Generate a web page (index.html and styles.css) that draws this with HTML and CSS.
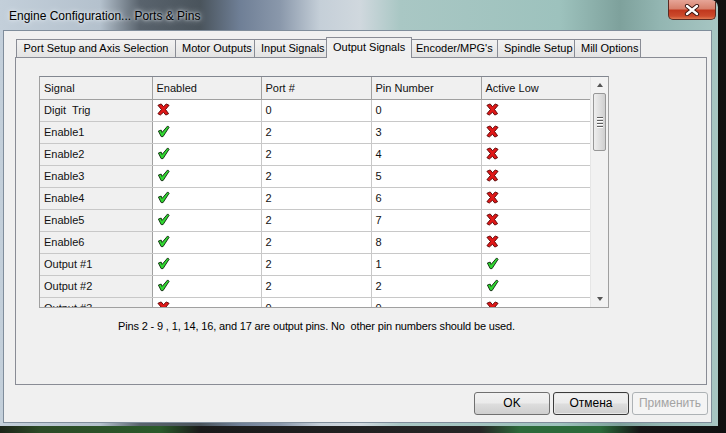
FILE: index.html
```html
<!DOCTYPE html>
<html>
<head>
<meta charset="utf-8">
<title>Engine Configuration... Ports &amp; Pins</title>
<link rel="stylesheet" href="styles.css">
</head>
<body>
<svg width="0" height="0" style="position:absolute">
	<defs>
		<symbol id="no" viewBox="0 0 14 14">
			<path d="M1,2.5 L4.5,1 L7,4 L10,1 L13,2.5 L9.2,7 L12.5,11.5 L9.5,13 L7,10 L3.5,13 L1,11.5 L4.8,7 Z" fill="#e01818" stroke="#5a0000" stroke-width="1" stroke-linejoin="round"/>
		</symbol>
		<symbol id="yes" viewBox="0 0 14 14">
			<path d="M1.5,6.5 L4.5,5.5 L5.5,8 L11.5,1 L13,2.5 L6.5,12.5 L4.5,12.5 Z" fill="#30d830" stroke="#0c2a0c" stroke-width="1" stroke-linejoin="round"/>
		</symbol>
	</defs>
</svg>

<div class="window">
	<div class="titlebar">
		<span class="title">Engine Configuration... Ports &amp; Pins</span>
		<div class="close">
			<svg width="16" height="12" viewBox="0 0 16 12">
				<path d="M3,2 L13,10 M13,2 L3,10" stroke="#3a1410" stroke-width="4.2" stroke-linecap="round"/>
				<path d="M3,2 L13,10 M13,2 L3,10" stroke="#ffffff" stroke-width="2.4" stroke-linecap="round"/>
			</svg>
		</div>
	</div>

	<div class="client">
		<div class="tabs">
			<div class="tab">Port Setup and Axis Selection</div>
			<div class="tab">Motor Outputs</div>
			<div class="tab">Input Signals</div>
			<div class="tab selected">Output Signals</div>
			<div class="tab">Encoder/MPG's</div>
			<div class="tab">Spindle Setup</div>
			<div class="tab">Mill Options</div>
		</div>

		<div class="panel">
			<div class="grid">
				<div class="grid_body">
					<table>
						<tr class="head">
							<td class="c1">Signal</td>
							<td class="c2">Enabled</td>
							<td class="c3">Port #</td>
							<td class="c4">Pin Number</td>
							<td class="c5">Active Low</td>
						</tr>
						<tr>
							<td class="name">Digit&nbsp; Trig</td>
							<td><svg class="ico"><use href="#no"/></svg></td>
							<td>0</td>
							<td>0</td>
							<td><svg class="ico"><use href="#no"/></svg></td>
						</tr>
						<tr>
							<td class="name">Enable1</td>
							<td><svg class="ico"><use href="#yes"/></svg></td>
							<td>2</td>
							<td>3</td>
							<td><svg class="ico"><use href="#no"/></svg></td>
						</tr>
						<tr>
							<td class="name">Enable2</td>
							<td><svg class="ico"><use href="#yes"/></svg></td>
							<td>2</td>
							<td>4</td>
							<td><svg class="ico"><use href="#no"/></svg></td>
						</tr>
						<tr>
							<td class="name">Enable3</td>
							<td><svg class="ico"><use href="#yes"/></svg></td>
							<td>2</td>
							<td>5</td>
							<td><svg class="ico"><use href="#no"/></svg></td>
						</tr>
						<tr>
							<td class="name">Enable4</td>
							<td><svg class="ico"><use href="#yes"/></svg></td>
							<td>2</td>
							<td>6</td>
							<td><svg class="ico"><use href="#no"/></svg></td>
						</tr>
						<tr>
							<td class="name">Enable5</td>
							<td><svg class="ico"><use href="#yes"/></svg></td>
							<td>2</td>
							<td>7</td>
							<td><svg class="ico"><use href="#no"/></svg></td>
						</tr>
						<tr>
							<td class="name">Enable6</td>
							<td><svg class="ico"><use href="#yes"/></svg></td>
							<td>2</td>
							<td>8</td>
							<td><svg class="ico"><use href="#no"/></svg></td>
						</tr>
						<tr>
							<td class="name">Output #1</td>
							<td><svg class="ico"><use href="#yes"/></svg></td>
							<td>2</td>
							<td>1</td>
							<td><svg class="ico"><use href="#yes"/></svg></td>
						</tr>
						<tr>
							<td class="name">Output #2</td>
							<td><svg class="ico"><use href="#yes"/></svg></td>
							<td>2</td>
							<td>2</td>
							<td><svg class="ico"><use href="#yes"/></svg></td>
						</tr>
						<tr>
							<td class="name">Output #3</td>
							<td><svg class="ico"><use href="#no"/></svg></td>
							<td>0</td>
							<td>0</td>
							<td><svg class="ico"><use href="#no"/></svg></td>
						</tr>
					</table>
				</div>
				<div class="vscroll">
					<div class="arrow up"></div>
					<div class="thumb"><span></span><span></span><span></span><span></span></div>
					<div class="track"></div>
					<div class="arrow down"></div>
				</div>
			</div>
			<div class="note">Pins 2 - 9 , 1, 14, 16, and 17 are output pins. No&nbsp; other pin numbers should be used.</div>
		</div>

		<div class="buttons">
			<div class="btn">OK</div>
			<div class="btn focus">Отмена</div>
			<div class="btn off">Применить</div>
		</div>
	</div>
</div>
</body>
</html>
```

FILE: styles.css
```css
html, body {margin:0;padding:0}
body {width:726px;height:433px;overflow:hidden;font-family:"Liberation Sans",Arial,sans-serif;font-size:11px;color:#000;
	background:linear-gradient(90deg,#1c2418 0px,#2c4a26 40px,#2a5a2a 160px,#1a1a1a 200px,#262626 480px,#2c6a3a 520px,#2a6a3a 600px,#151515 640px,#101010 100%)}

.window {width:718px;height:426px;border-radius:0 7px 0 0;
	background:linear-gradient(90deg,#c3cfda 0px,#b4c1cd 100px,#59636d 140px,#4a545c 200px,#6f7f96 240px,#8a98ab 280px,#c5cfd8 320px,#d0d8de 360px,#a9c7c4 400px,#9dc2bd 560px,#7ea19c 620px,#93b6b2 660px,#a7c6c3 718px);
	display:flex;flex-direction:column;overflow:hidden}

.titlebar {height:30px;display:flex;align-items:flex-start;justify-content:space-between}
.title {font-family:"Liberation Sans",Arial,sans-serif;font-size:12px;color:#000;margin:9px 0 0 9px;text-shadow:0 0 6px #e8eef4,0 0 3px #e8eef4}
.close {width:46px;height:19px;margin-right:2px;border:1px solid #5a2a22;border-top:none;border-radius:0 0 5px 5px;
	background:linear-gradient(180deg,#e6a597 0%,#d7816d 45%,#c1381e 55%,#cc4a2c 85%,#e07a52 100%);
	display:flex;align-items:center;justify-content:center}

.client {margin-left:3px;width:707px;height:391px;border:1px solid #7f8d9b;background:#f0f0f0;display:flex;flex-direction:column}

.tabs {display:flex;align-items:flex-end;height:19px;margin-top:7px;padding-left:12px}
.tab {height:18px;line-height:17px;padding:0 6px;border:1px solid #898c95;border-bottom:none;margin-right:-1px;
	background:linear-gradient(180deg,#f2f2f2,#e3e3e3);white-space:nowrap;text-align:center;box-sizing:border-box}
.tab:nth-child(1) {width:160px}
.tab:nth-child(2) {width:80px}
.tab:nth-child(3) {width:75px}
.tab:nth-child(4) {width:83px}
.tab:nth-child(5) {width:89px}
.tab:nth-child(6) {width:78px}
.tab:nth-child(7) {width:67px}
.tab.selected {height:21px;line-height:19px;background:#f0f0f0;position:relative;z-index:1;margin-bottom:-1px;margin-left:-2px;margin-right:-3px;width:86px}

.panel {margin-left:11px;width:692px;height:328px;box-sizing:border-box;border:1px solid #898c95;background:#f0f0f0}

.grid {display:flex;margin:18px 0 0 23px;width:570px;height:232px;box-sizing:border-box;border:1px solid #a0a0a0;border-top-color:#828790;background:#fff}
.grid_body {width:551px;height:230px;overflow:hidden}
table {border-collapse:collapse;table-layout:fixed;width:552px}
td {height:22px;padding:0 0 0 4px;border:1px solid #c8c8c8;white-space:nowrap;overflow:hidden;vertical-align:middle;box-sizing:border-box;color:#111}
tr td:first-child {border-left:none}
tr.head td {border-top:none;border-color:#a0a0a0;background:#f0f0f0;height:22px}
td.c1 {width:112px}
td.c2 {width:109px}
td.c3 {width:110px}
td.c4 {width:110px}
td.c5 {width:111px}
td.name {background:#f0f0f0;border-right-color:#a0a0a0}
svg.ico {width:13px;height:13px;display:block;margin-top:-1px}

.vscroll {width:17px;height:230px;background:#f2f2f2;border-left:1px solid #e6e6e6;display:flex;flex-direction:column;align-items:center}
.arrow {width:0;height:0;border-left:3.5px solid transparent;border-right:3.5px solid transparent}
.arrow.up {border-bottom:4px solid #555;margin-top:6px;margin-bottom:6px}
.arrow.down {border-top:4px solid #555;margin-bottom:6px}
.thumb {width:13px;height:58px;box-sizing:border-box;border:1px solid #979797;border-radius:2px;
	background:linear-gradient(90deg,#eeeeee,#dcdcdc 60%,#cfcfcf);display:flex;flex-direction:column;align-items:center;justify-content:center;gap:1px}
.thumb span {display:block;width:6px;height:1px;background:#5f5f5f;border-bottom:1px solid #fff}
.track {flex:1}

.note {margin:11px 0 0 102px;height:14px;line-height:14px;letter-spacing:-0.15px}

.buttons {display:flex;justify-content:flex-end;gap:3px;margin-top:7px;padding-right:3px}
.btn {width:76px;height:23px;box-sizing:border-box;border:1px solid #707070;border-radius:3px;text-align:center;line-height:21px;font-size:12px;
	background:linear-gradient(180deg,#f2f2f2 0%,#ebebeb 48%,#dddddd 52%,#cfcfcf 100%)}
.btn.focus {border-color:#3c3c3c;box-shadow:inset 0 0 0 1px #e8e8e8}
.btn.off {color:#a3a3a3;border-color:#adb2b5;background:#f4f4f4}
```
